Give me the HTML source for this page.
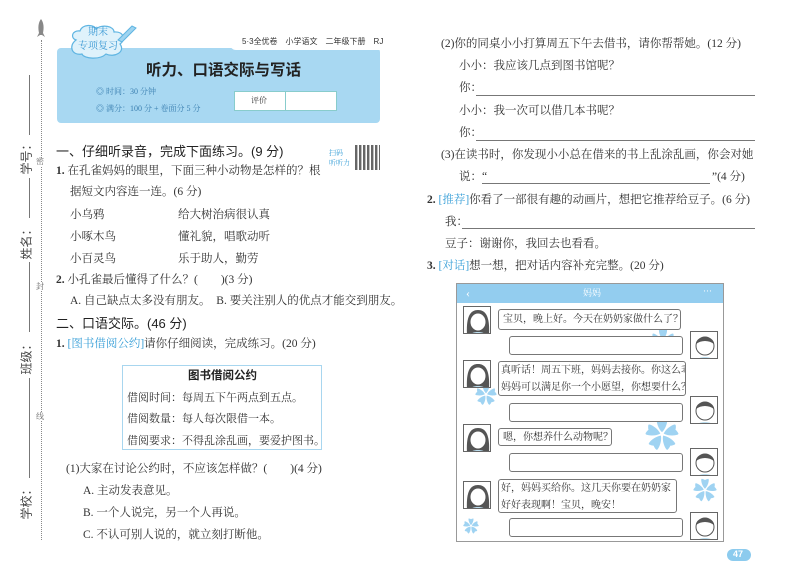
<!DOCTYPE html>
<html><head><meta charset="utf-8"><style>
*{margin:0;padding:0;box-sizing:border-box}
body{width:800px;height:574px;background:#fff;position:relative;overflow:hidden;font-family:"Liberation Serif","Noto Serif CJK SC",serif;color:#333;font-size:11.5px}
.a{position:absolute;white-space:nowrap;line-height:1}
.h{font-family:"Liberation Sans","Noto Sans CJK SC",sans-serif;font-weight:bold;color:#222}
.bl{color:#3aa0d8}
.ln{position:absolute;border-bottom:1px solid #777;height:0}
.rot{position:absolute;transform:rotate(-90deg);font-family:"Liberation Sans","Noto Sans CJK SC",sans-serif;font-size:12px;color:#444;white-space:nowrap}
.bub{position:absolute;border:1px solid #777;border-radius:3px;background:#fff;font-size:10px;line-height:17px;padding:2px 4px;white-space:nowrap;overflow:hidden}
.av{position:absolute;width:28px;height:28px;border:1px solid #666;background:#fff;overflow:hidden}
</style></head><body>
<div style="position:absolute;left:41px;top:40px;height:500px;border-left:1px dotted #888"></div>
<svg style="position:absolute;left:35px;top:18px" width="12" height="22"><path d="M6 1 C9 5 9 10 8 15 L10 19 L7 17 L5 17 L2 19 L4 15 C3 10 3 5 6 1Z" fill="#888"/></svg>
<div style="position:absolute;left:29px;top:75px;height:60px;border-left:1px solid #777"></div>
<div style="position:absolute;left:29px;top:178px;height:40px;border-left:1px solid #777"></div>
<div style="position:absolute;left:29px;top:262px;height:70px;border-left:1px solid #777"></div>
<div style="position:absolute;left:29px;top:378px;height:100px;border-left:1px solid #777"></div>
<div class="rot" style="left:8px;top:148px">学号：</div>
<div class="rot" style="left:8px;top:233px">姓名：</div>
<div class="rot" style="left:8px;top:348px">班级：</div>
<div class="rot" style="left:8px;top:493px">学校：</div>
<div class="a" style="left:36px;top:158px;font-size:8px;color:#666;background:#fff">密</div>
<div class="a" style="left:36px;top:283px;font-size:8px;color:#666;background:#fff">封</div>
<div class="a" style="left:36px;top:413px;font-size:8px;color:#666;background:#fff">线</div>
<div style="position:absolute;left:57px;top:48px;width:323px;height:75px;background:#a8d8f2;border-radius:4px"></div>
<div style="position:absolute;left:230px;top:36px;width:150px;height:14px;background:#fff;border-radius:0 0 0 6px"></div>
<div class="a h" style="left:242px;top:38px;font-size:8px;font-weight:normal;color:#333">5·3全优卷　小学语文　二年级下册　RJ</div>
<svg style="position:absolute;left:66px;top:22px" width="75" height="38"><path d="M10 18 C4 16 6 8 14 9 C16 2 28 2 30 7 C36 2 48 4 48 10 C58 9 60 18 54 22 C60 30 48 36 40 32 C34 38 18 37 16 32 C6 34 2 24 10 18Z" fill="#dff2fb" stroke="#5fb5e2" stroke-width="1.2"/><path d="M52 18 L66 4 L70 6 L56 20Z" fill="#9fd4f0" stroke="#5fb5e2"/></svg>
<div class="a" style="left:88px;top:28px;font-size:10px;color:#3a98d4">期末</div>
<div class="a" style="left:78px;top:42px;font-size:10px;color:#3a98d4">专项复习</div>
<div class="a h" style="left:146px;top:63px;font-size:15.5px">听力、口语交际与写话</div>
<div class="a" style="left:96px;top:88px;font-size:8px;color:#3a7fb0">◎ 时间：30 分钟</div>
<div class="a" style="left:96px;top:105px;font-size:8px;color:#3a7fb0">◎ 满分：100 分 + 卷面分 5 分</div>
<div style="position:absolute;left:234px;top:91px;width:103px;height:20px;background:#fff;border:1px solid #8cc"></div>
<div style="position:absolute;left:285px;top:91px;height:20px;border-left:1px solid #8cc"></div>
<div class="a" style="left:251px;top:97px;font-size:8px">评价</div>
<div class="a h" style="left:56px;top:145px;font-size:13px;font-weight:normal">一、仔细听录音，完成下面练习。(9 分)</div>
<div class="a" style="left:329px;top:148px;font-size:7px;color:#3aa0d8;line-height:10px">扫码<br>听听力</div>
<div style="position:absolute;left:355px;top:145px;width:25px;height:25px;background:repeating-linear-gradient(90deg,#333 0 2px,#aaa 2px 3px,#fff 3px 4px),#333;opacity:.75"></div>
<div class="a" style="left:56px;top:166px"><b>1.</b> 在孔雀妈妈的眼里，下面三种小动物是怎样的？根</div>
<div class="a" style="left:70px;top:187px">据短文内容连一连。(6 分)</div>
<div class="a" style="left:70px;top:210px">小乌鸦</div><div class="a" style="left:178px;top:210px">给大树治病很认真</div>
<div class="a" style="left:70px;top:232px">小啄木鸟</div><div class="a" style="left:178px;top:232px">懂礼貌，唱歌动听</div>
<div class="a" style="left:70px;top:254px">小百灵鸟</div><div class="a" style="left:178px;top:254px">乐于助人，勤劳</div>
<div class="a" style="left:56px;top:275px"><b>2.</b> 小孔雀最后懂得了什么？(　　)(3 分)</div>
<div class="a" style="left:70px;top:296px">A. 自己缺点太多没有朋友。　B. 要关注别人的优点才能交到朋友。</div>
<div class="a h" style="left:56px;top:317px;font-size:13px;font-weight:normal">二、口语交际。(46 分)</div>
<div class="a" style="left:56px;top:339px"><b>1.</b> <span class="bl">[图书借阅公约]</span>请你仔细阅读，完成练习。(20 分)</div>
<div style="position:absolute;left:122px;top:365px;width:200px;height:85px;border:1.5px solid #a8d6ef"></div>
<div class="a h" style="left:188px;top:371px;font-size:11.5px">图书借阅公约</div>
<div class="a" style="left:127px;top:393px;font-size:11px">借阅时间：每周五下午两点到五点。</div>
<div class="a" style="left:127px;top:414px;font-size:11px">借阅数量：每人每次限借一本。</div>
<div class="a" style="left:127px;top:436px;font-size:11px">借阅要求：不得乱涂乱画，要爱护图书。</div>
<div class="a" style="left:66px;top:464px">(1)大家在讨论公约时，不应该怎样做？(　　)(4 分)</div>
<div class="a" style="left:83px;top:486px">A. 主动发表意见。</div>
<div class="a" style="left:83px;top:508px">B. 一个人说完，另一个人再说。</div>
<div class="a" style="left:83px;top:530px">C. 不认可别人说的，就立刻打断他。</div>
<div class="a" style="left:441px;top:39px">(2)你的同桌小小打算周五下午去借书，请你帮帮她。(12 分)</div>
<div class="a" style="left:459px;top:61px">小小：我应该几点到图书馆呢？</div>
<div class="a" style="left:459px;top:83px">你：</div><div class="ln" style="left:476px;top:95px;width:279px"></div>
<div class="a" style="left:459px;top:106px">小小：我一次可以借几本书呢？</div>
<div class="a" style="left:459px;top:128px">你：</div><div class="ln" style="left:476px;top:140px;width:279px"></div>
<div class="a" style="left:441px;top:150px">(3)在读书时，你发现小小总在借来的书上乱涂乱画，你会对她</div>
<div class="a" style="left:459px;top:172px">说：“</div><div class="ln" style="left:482px;top:183px;width:228px"></div><div class="a" style="left:712px;top:172px">”(4 分)</div>
<div class="a" style="left:427px;top:195px"><b>2.</b> <span class="bl">[推荐]</span>你看了一部很有趣的动画片，想把它推荐给豆子。(6 分)</div>
<div class="a" style="left:445px;top:217px">我：</div><div class="ln" style="left:462px;top:228px;width:293px"></div>
<div class="a" style="left:445px;top:239px">豆子：谢谢你，我回去也看看。</div>
<div class="a" style="left:427px;top:261px"><b>3.</b> <span class="bl">[对话]</span>想一想，把对话内容补充完整。(20 分)</div>
<div style="position:absolute;left:456px;top:283px;width:268px;height:259px;border:1px solid #999;background:#fff"></div>
<div style="position:absolute;left:457px;top:284px;width:266px;height:19px;background:#93cdef"></div>
<div class="a" style="left:466px;top:287px;color:#fff;font-size:12px">‹</div>
<div class="a" style="left:583px;top:289px;color:#fff;font-size:9px">妈妈</div>
<div class="a" style="left:703px;top:287px;color:#fff;font-size:9px">···</div>
<div class="a" style="left:475px;top:385px;color:#9fd3f2;font-size:22px">✿</div>
<div class="a" style="left:645px;top:420px;color:#9fd3f2;font-size:34px">✿</div>
<div class="a" style="left:693px;top:480px;color:#9fd3f2;font-size:24px">✿</div>
<div class="a" style="left:463px;top:520px;color:#9fd3f2;font-size:16px">✿</div>
<div class="a" style="left:650px;top:330px;color:#9fd3f2;font-size:26px">✿</div>
<div class="av" style="left:463px;top:306px"><svg width="28" height="28"><path d="M3 28 C2 10 6 3 14 3 C22 3 26 10 25 28Z" fill="#555"/><ellipse cx="14" cy="15" rx="8" ry="9" fill="#fff" stroke="#555"/><path d="M6 28 C8 24 20 24 22 28" fill="#bde" /></svg></div>
<div class="av" style="left:463px;top:360px"><svg width="28" height="28"><path d="M3 28 C2 10 6 3 14 3 C22 3 26 10 25 28Z" fill="#555"/><ellipse cx="14" cy="15" rx="8" ry="9" fill="#fff" stroke="#555"/><path d="M6 28 C8 24 20 24 22 28" fill="#bde"/></svg></div>
<div class="av" style="left:463px;top:424px"><svg width="28" height="28"><path d="M3 28 C2 10 6 3 14 3 C22 3 26 10 25 28Z" fill="#555"/><ellipse cx="14" cy="15" rx="8" ry="9" fill="#fff" stroke="#555"/><path d="M6 28 C8 24 20 24 22 28" fill="#bde"/></svg></div>
<div class="av" style="left:463px;top:481px"><svg width="28" height="28"><path d="M3 28 C2 10 6 3 14 3 C22 3 26 10 25 28Z" fill="#555"/><ellipse cx="14" cy="15" rx="8" ry="9" fill="#fff" stroke="#555"/><path d="M6 28 C8 24 20 24 22 28" fill="#bde"/></svg></div>
<div class="av" style="left:690px;top:331px"><svg width="28" height="28"><circle cx="14" cy="14" r="9" fill="#fff" stroke="#555"/><path d="M5 12 C5 3 23 3 23 12 C18 8 10 8 5 12Z" fill="#555"/><path d="M6 28 C8 24 20 24 22 28" fill="#bde"/></svg></div>
<div class="av" style="left:690px;top:396px"><svg width="28" height="28"><circle cx="14" cy="14" r="9" fill="#fff" stroke="#555"/><path d="M5 12 C5 3 23 3 23 12 C18 8 10 8 5 12Z" fill="#555"/><path d="M6 28 C8 24 20 24 22 28" fill="#bde"/></svg></div>
<div class="av" style="left:690px;top:448px"><svg width="28" height="28"><circle cx="14" cy="14" r="9" fill="#fff" stroke="#555"/><path d="M5 12 C5 3 23 3 23 12 C18 8 10 8 5 12Z" fill="#555"/><path d="M6 28 C8 24 20 24 22 28" fill="#bde"/></svg></div>
<div class="av" style="left:690px;top:512px"><svg width="28" height="28"><circle cx="14" cy="14" r="9" fill="#fff" stroke="#555"/><path d="M5 12 C5 3 23 3 23 12 C18 8 10 8 5 12Z" fill="#555"/><path d="M6 28 C8 24 20 24 22 28" fill="#bde"/></svg></div>
<div class="bub" style="left:498px;top:309px;width:183px;height:21px;line-height:15px">宝贝，晚上好。今天在奶奶家做什么了？</div>
<div class="bub" style="left:509px;top:336px;width:174px;height:19px"></div>
<div class="bub" style="left:498px;top:361px;width:188px;height:35px;padding:0 2px">真听话！周五下班，妈妈去接你。你这么乖，<br>妈妈可以满足你一个小愿望，你想要什么？</div>
<div class="bub" style="left:509px;top:403px;width:174px;height:19px"></div>
<div class="bub" style="left:498px;top:428px;width:114px;height:18px;line-height:13px">嗯，你想养什么动物呢？</div>
<div class="bub" style="left:509px;top:453px;width:174px;height:19px"></div>
<div class="bub" style="left:498px;top:479px;width:179px;height:34px;padding:0 2px">好，妈妈买给你。这几天你要在奶奶家<br>好好表现啊！宝贝，晚安！</div>
<div class="bub" style="left:509px;top:518px;width:174px;height:19px"></div>
<div style="position:absolute;left:727px;top:549px;width:24px;height:12px;background:#8ccbee;border-radius:6px"></div>
<div class="a h" style="left:733px;top:550px;font-size:9px;color:#fff">47</div>
</body></html>
